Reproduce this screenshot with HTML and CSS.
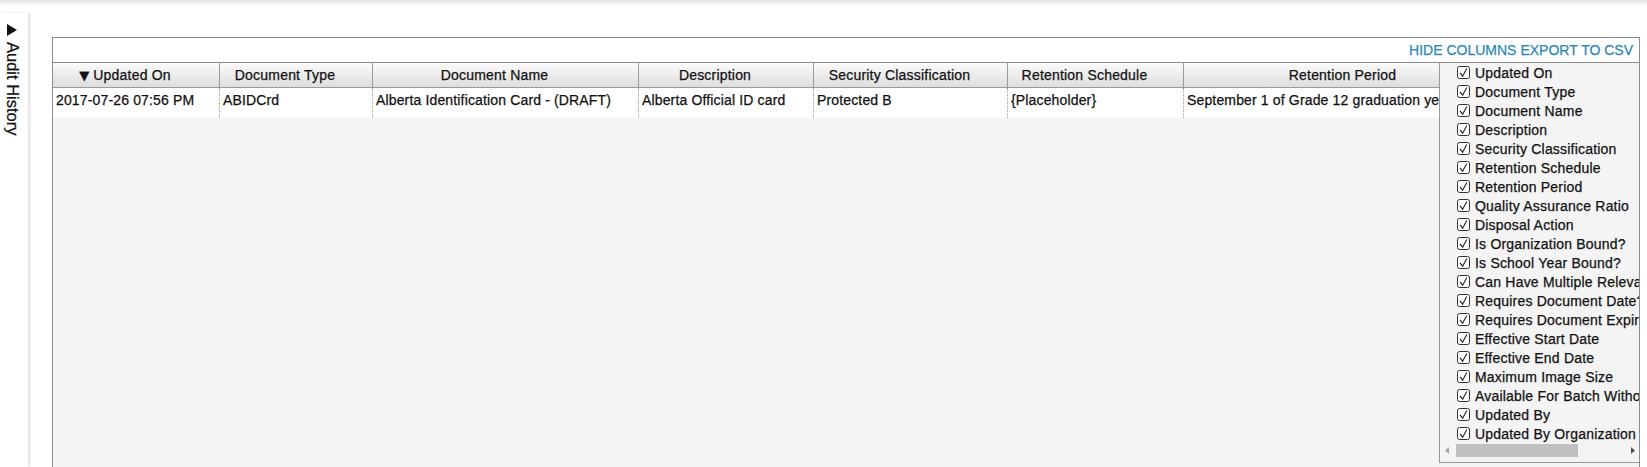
FILE: index.html
```html
<!DOCTYPE html>
<html lang="en">
<head>
<meta charset="utf-8">
<title>Audit History</title>
<link rel="stylesheet" href="styles.css">
</head>
<body>
<div class="topshade"></div>
<div class="layout">
  <aside class="sidebar">
    <svg class="side-arrow" width="10" height="12" viewBox="0 0 10 12"><polygon points="0,0 10,6 0,12" fill="#111"/></svg>
    <span class="vtext">Audit History</span>
  </aside>
  <main class="main">
    <div class="grid-box">
      <div class="toolbar">
        <a class="tool-link" href="#">HIDE COLUMNS</a>
        <a class="tool-link" href="#">EXPORT TO CSV</a>
      </div>
      <div class="thead">
        <div class="th"><span class="sort">&#9660;</span> Updated On</div>
        <div class="th">Document Type</div>
        <div class="th">Document Name</div>
        <div class="th">Description</div>
        <div class="th">Security Classification</div>
        <div class="th">Retention Schedule</div>
        <div class="th">Retention Period</div>
      </div>
      <div class="trow">
        <div class="td">2017-07-26 07:56 PM</div>
        <div class="td">ABIDCrd</div>
        <div class="td">Alberta Identification Card - (DRAFT)</div>
        <div class="td">Alberta Official ID card</div>
        <div class="td">Protected B</div>
        <div class="td">{Placeholder}</div>
        <div class="td">September 1 of Grade 12 graduation year</div>
      </div>
      <div class="col-panel">
        <ul class="col-list">
          <li class="col-item"><svg class="cb" viewBox="0 0 13 13"><rect x="0.5" y="0.5" width="12" height="12" rx="2"/><path d="M3 6.8 L5.6 10.2 L9.8 2.6"/></svg>Updated On</li>
          <li class="col-item"><svg class="cb" viewBox="0 0 13 13"><rect x="0.5" y="0.5" width="12" height="12" rx="2"/><path d="M3 6.8 L5.6 10.2 L9.8 2.6"/></svg>Document Type</li>
          <li class="col-item"><svg class="cb" viewBox="0 0 13 13"><rect x="0.5" y="0.5" width="12" height="12" rx="2"/><path d="M3 6.8 L5.6 10.2 L9.8 2.6"/></svg>Document Name</li>
          <li class="col-item"><svg class="cb" viewBox="0 0 13 13"><rect x="0.5" y="0.5" width="12" height="12" rx="2"/><path d="M3 6.8 L5.6 10.2 L9.8 2.6"/></svg>Description</li>
          <li class="col-item"><svg class="cb" viewBox="0 0 13 13"><rect x="0.5" y="0.5" width="12" height="12" rx="2"/><path d="M3 6.8 L5.6 10.2 L9.8 2.6"/></svg>Security Classification</li>
          <li class="col-item"><svg class="cb" viewBox="0 0 13 13"><rect x="0.5" y="0.5" width="12" height="12" rx="2"/><path d="M3 6.8 L5.6 10.2 L9.8 2.6"/></svg>Retention Schedule</li>
          <li class="col-item"><svg class="cb" viewBox="0 0 13 13"><rect x="0.5" y="0.5" width="12" height="12" rx="2"/><path d="M3 6.8 L5.6 10.2 L9.8 2.6"/></svg>Retention Period</li>
          <li class="col-item"><svg class="cb" viewBox="0 0 13 13"><rect x="0.5" y="0.5" width="12" height="12" rx="2"/><path d="M3 6.8 L5.6 10.2 L9.8 2.6"/></svg>Quality Assurance Ratio</li>
          <li class="col-item"><svg class="cb" viewBox="0 0 13 13"><rect x="0.5" y="0.5" width="12" height="12" rx="2"/><path d="M3 6.8 L5.6 10.2 L9.8 2.6"/></svg>Disposal Action</li>
          <li class="col-item"><svg class="cb" viewBox="0 0 13 13"><rect x="0.5" y="0.5" width="12" height="12" rx="2"/><path d="M3 6.8 L5.6 10.2 L9.8 2.6"/></svg>Is Organization Bound?</li>
          <li class="col-item"><svg class="cb" viewBox="0 0 13 13"><rect x="0.5" y="0.5" width="12" height="12" rx="2"/><path d="M3 6.8 L5.6 10.2 L9.8 2.6"/></svg>Is School Year Bound?</li>
          <li class="col-item"><svg class="cb" viewBox="0 0 13 13"><rect x="0.5" y="0.5" width="12" height="12" rx="2"/><path d="M3 6.8 L5.6 10.2 L9.8 2.6"/></svg>Can Have Multiple Relevant Dates?</li>
          <li class="col-item"><svg class="cb" viewBox="0 0 13 13"><rect x="0.5" y="0.5" width="12" height="12" rx="2"/><path d="M3 6.8 L5.6 10.2 L9.8 2.6"/></svg>Requires Document Date?</li>
          <li class="col-item"><svg class="cb" viewBox="0 0 13 13"><rect x="0.5" y="0.5" width="12" height="12" rx="2"/><path d="M3 6.8 L5.6 10.2 L9.8 2.6"/></svg>Requires Document Expiry Date?</li>
          <li class="col-item"><svg class="cb" viewBox="0 0 13 13"><rect x="0.5" y="0.5" width="12" height="12" rx="2"/><path d="M3 6.8 L5.6 10.2 L9.8 2.6"/></svg>Effective Start Date</li>
          <li class="col-item"><svg class="cb" viewBox="0 0 13 13"><rect x="0.5" y="0.5" width="12" height="12" rx="2"/><path d="M3 6.8 L5.6 10.2 L9.8 2.6"/></svg>Effective End Date</li>
          <li class="col-item"><svg class="cb" viewBox="0 0 13 13"><rect x="0.5" y="0.5" width="12" height="12" rx="2"/><path d="M3 6.8 L5.6 10.2 L9.8 2.6"/></svg>Maximum Image Size</li>
          <li class="col-item"><svg class="cb" viewBox="0 0 13 13"><rect x="0.5" y="0.5" width="12" height="12" rx="2"/><path d="M3 6.8 L5.6 10.2 L9.8 2.6"/></svg>Available For Batch Without Review?</li>
          <li class="col-item"><svg class="cb" viewBox="0 0 13 13"><rect x="0.5" y="0.5" width="12" height="12" rx="2"/><path d="M3 6.8 L5.6 10.2 L9.8 2.6"/></svg>Updated By</li>
          <li class="col-item"><svg class="cb" viewBox="0 0 13 13"><rect x="0.5" y="0.5" width="12" height="12" rx="2"/><path d="M3 6.8 L5.6 10.2 L9.8 2.6"/></svg>Updated By Organization</li>
        </ul>
        <div class="hscroll">
          <svg class="sb-arrow" width="15" height="15" viewBox="0 0 15 15"><polygon points="9,4 5,7.5 9,11" fill="#a3a3a3"/></svg>
          <div class="sb-track"><div class="sb-thumb"></div></div>
          <svg class="sb-arrow" width="15" height="15" viewBox="0 0 15 15"><polygon points="6,4 10,7.5 6,11" fill="#505050"/></svg>
        </div>
      </div>
    </div>
  </main>
</div>
</body>
</html>
```

FILE: styles.css
```css
html, body {
  margin: 0;
  height: 100%;
  overflow: hidden;
  background: #fff;
}
body {
  font-family: "Liberation Sans", Arial, sans-serif;
  font-size: 14px;
  color: #111;
  -webkit-text-stroke: 0.25px currentColor;
}
.topshade {
  height: 5px;
  background: linear-gradient(#e2e2e2, #fbfbfb);
}
.layout {
  display: flex;
  height: calc(100% - 5px);
  padding-top: 8px;
  box-sizing: border-box;
}
.sidebar {
  width: 28px;
  flex: none;
  background: #fff;
  box-shadow: 2px 0 3px rgba(0, 0, 0, 0.13);
  display: flex;
  flex-direction: column;
  align-items: flex-start;
  padding-top: 11px;
  box-sizing: border-box;
}
.side-arrow {
  margin-left: 7px;
  display: block;
}
.vtext {
  writing-mode: vertical-rl;
  font-size: 16.5px;
  margin-top: 6px;
  margin-left: 3px;
  line-height: 20px;
}
.main {
  flex: 1;
  padding: 24px 7px 0 24px;
  min-width: 0;
  display: flex;
}
.grid-box {
  flex: 1;
  position: relative;
  border: 1px solid #8c8c8c;
  border-bottom: none;
  background: #f4f4f4;
  overflow: hidden;
}
.toolbar {
  height: 24px;
  background: #fff;
  border-bottom: 1px solid #8c8c8c;
  display: flex;
  justify-content: flex-end;
  align-items: center;
  gap: 4px;
  padding-right: 6px;
}
.tool-link {
  color: #2b88b7;
  text-decoration: none;
}
.thead, .trow {
  display: grid;
  grid-template-columns: 167px 153px 266px 175px 194px 176px 340px;
}
.thead {
  height: 25px;
  box-sizing: border-box;
  border-bottom: 1px solid #9a9a9a;
  background: linear-gradient(#fbfbfb, #dedede);
}
.th {
  border-right: 1px solid #9a9a9a;
  text-align: center;
  padding: 3px 22px 0 0;
  line-height: 18px;
  white-space: nowrap;
  overflow: hidden;
  letter-spacing: 0.2px;
}
.sort {
  font-family: "DejaVu Sans", sans-serif;
  font-size: 13px;
  letter-spacing: 0;
}
.trow {
  height: 30px;
  background: #fff;
}
.td {
  border-right: 1px dotted #9a9a9a;
  padding: 4px 4px 0 3px;
  line-height: 16px;
  white-space: nowrap;
  overflow: hidden;
  letter-spacing: 0.15px;
}
.col-panel {
  position: absolute;
  top: 25px;
  left: 1386px;
  width: 201px;
  height: 400px;
  box-sizing: border-box;
  background: #f4f4f4;
  border-left: 1px solid #9a9a9a;
  border-bottom: 1px solid #9a9a9a;
  overflow: hidden;
}
.col-list {
  list-style: none;
  margin: 0;
  padding: 0 0 0 17px;
}
.col-item {
  height: 19px;
  display: flex;
  align-items: center;
  white-space: nowrap;
  letter-spacing: 0.2px;
}
.cb {
  width: 13px;
  height: 13px;
  flex: none;
  margin-right: 5px;
}
.cb rect {
  fill: #fff;
  stroke: #333;
  stroke-width: 1;
}
.cb path {
  fill: none;
  stroke: #222;
  stroke-width: 1.1;
}
.hscroll {
  height: 15px;
  display: flex;
  align-items: stretch;
}
.sb-arrow {
  flex: none;
  display: block;
}
.sb-track {
  flex: 1;
  display: flex;
  align-items: center;
}
.sb-thumb {
  width: 122px;
  height: 13px;
  margin-left: 1px;
  background: #c1c1c1;
}
```
